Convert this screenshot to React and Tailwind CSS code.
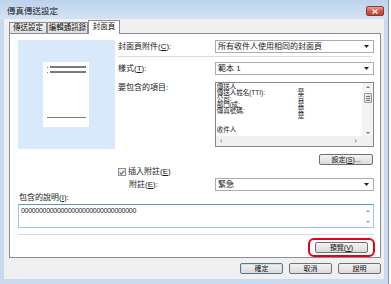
import React from "react";

const font = "font-['Liberation_Sans','Noto_Sans_CJK_TC',sans-serif]";

function Tri({ dir = "down", color = "#222", w = 5, h = 3 }) {
  const pts = {
    down: `0,0 ${w},0 ${w / 2},${h}`,
    up: `0,${h} ${w},${h} ${w / 2},0`,
    left: `${w},0 ${w},${h} 0,${h / 2}`,
    right: `0,0 0,${h} ${w},${h / 2}`,
  }[dir];
  return (
    <svg width={w} height={h} viewBox={`0 0 ${w} ${h}`} className="block shrink-0">
      <polygon points={pts} fill={color} />
    </svg>
  );
}

function Dropdown({ text, className = "" }) {
  return (
    <div
      className={`flex items-center justify-between w-[159px] h-[13px] border border-[#acacac] bg-white pl-[2px] pr-[4px] text-[8px] leading-none text-[#1a1a1a] ${className}`}
    >
      <span>{text}</span>
      <Tri />
    </div>
  );
}

function Btn({ children, className = "" }) {
  return (
    <div
      className={`flex items-center justify-center h-[11px] rounded-[2px] border border-[#707070] bg-linear-to-b from-[#f3f3f3] to-[#dadada] text-[7px] leading-none text-[#111] ${className}`}
    >
      {children}
    </div>
  );
}

function Tab({ children, active, className = "" }) {
  if (active) {
    return (
      <div
        className={`relative z-10 -mb-px flex items-start justify-center h-[14px] pt-[2px] border border-b-0 border-[#898c95] bg-white text-[7.5px] leading-none text-[#111] ${className}`}
      >
        {children}
      </div>
    );
  }
  return (
    <div
      className={`flex items-start justify-center h-[11px] pt-[1px] border border-b-0 border-[#898c95] bg-linear-to-b from-[#f2f2f2] to-[#e0e0e0] text-[7.5px] leading-none text-[#111] ${className}`}
    >
      {children}
    </div>
  );
}

const items = ["傳送人", "傳送人姓名(TTI):", "公司:", "部門/成:", "傳真號碼:"];
const values = ["是", "否", "是", "是", "是"];

export default function App() {
  return (
    <div className={`w-[391px] h-[284px] bg-white overflow-hidden ${font}`}>
      <div className="w-[389px] h-[284px] flex flex-col bg-[#c7daf0] border-r border-[#7f97b5]">
        {/* title bar */}
        <div className="h-[19px] flex items-start pt-[7px] pl-[7px] pr-[4px] bg-linear-to-b from-[#bcd2ec] to-[#d3e3f4]">
          <span className="text-[8.5px] leading-[9px] text-[#1b1b1b]">傳真傳送設定</span>
          <div className="ml-auto -mt-[1px] w-[18px] h-[10px] rounded-[2px] border border-[#8b3b30] bg-linear-to-b from-[#e6a193] via-[#cf5a48] to-[#c7402f] flex items-center justify-center">
            <svg width="6" height="5" viewBox="0 0 6 5">
              <path d="M0.5 0.5 L5.5 4.5 M5.5 0.5 L0.5 4.5" stroke="#fff" strokeWidth="1.3" />
            </svg>
          </div>
        </div>

        {/* client */}
        <div className="ml-[4px] w-[380px] h-[260px] bg-[#f0f0f0] pl-[5px] pt-[1px]">
          <div className="flex items-end h-[13px]">
            <Tab className="w-[38px]">傳送設定</Tab>
            <Tab className="w-[41px]">編輯通訊錄</Tab>
            <Tab active className="w-[32px]">封面頁</Tab>
          </div>

          {/* panel */}
          <div className="w-[372px] h-[225px] border border-[#898c95] bg-white pl-[8px] pt-[6px] text-[8px] leading-none text-[#1a1a1a]">
            <div className="flex">
              {/* preview */}
              <div className="w-[97px] h-[109px] bg-[#d9e9fc] pt-[22px] pl-[25px]">
                <div className="w-[46px] h-[65px] bg-white pt-[4px] pl-[4px] pr-[3px] flex flex-col">
                  <div className="flex items-center gap-[2px]">
                    <div className="w-[1px] h-[1px] bg-[#777]" />
                    <div className="flex-1 h-[2px] bg-[#7a7a7a]" />
                  </div>
                  <div className="flex items-center gap-[2px] mt-[3px]">
                    <div className="w-[1px] h-[1px] bg-[#777]" />
                    <div className="flex-1 h-[2px] bg-[#7a7a7a]" />
                  </div>
                  <div className="mt-auto mb-[9px] h-[1px] bg-[#7a7a7a]" />
                </div>
              </div>

              {/* right form */}
              <div className="ml-[3px] w-[256px]">
                <div className="flex items-center">
                  <span className="w-[97px]">
                    封面頁附件(<u>C</u>):
                  </span>
                  <Dropdown text="所有收件人使用相同的封面頁" />
                </div>
                <div className="mt-[3px] w-[254px] h-px bg-[#d7dde3]" />
                <div className="mt-[5px] flex items-center">
                  <span className="w-[97px]">
                    樣式(<u>T</u>):
                  </span>
                  <Dropdown text="範本 1" className="h-[12px]" />
                </div>
                <div className="mt-[7px] flex items-start">
                  <span className="w-[97px] pt-[2px]">要包含的項目:</span>
                  <div className="w-[160px] h-[65px] border border-[#828790] bg-white flex flex-col">
                    <div className="flex-1 flex min-h-0">
                      <div className="flex-1 flex pl-[1px] pt-[1px] text-[6.5px] leading-[6px] overflow-hidden">
                        <div className="w-[81px] flex flex-col">
                          {items.map((t) => (
                            <div key={t} className="h-[6px] whitespace-nowrap">
                              {t}
                            </div>
                          ))}
                          <div className="h-[6px] mt-[13px]">收件人</div>
                        </div>
                        <div className="flex flex-col pt-[5px]">
                          {values.map((t, i) => (
                            <div key={i} className="h-[6px]">
                              {t}
                            </div>
                          ))}
                        </div>
                      </div>
                      <div className="w-[11px] bg-[#f3f3f3] flex flex-col items-center pt-[3px] pb-[2px]">
                        <Tri dir="up" color="#777" w={4} h={2} />
                        <div className="mt-[5px] w-[8px] h-[10px] rounded-[1px] border border-[#9a9a9a] bg-linear-to-r from-[#f2f2f2] to-[#dcdcdc] flex flex-col items-center justify-center gap-[1px]">
                          <div className="w-[4px] h-px bg-[#777]" />
                          <div className="w-[4px] h-px bg-[#777]" />
                          <div className="w-[4px] h-px bg-[#777]" />
                        </div>
                        <div className="mt-auto">
                          <Tri dir="down" color="#777" w={4} h={2} />
                        </div>
                      </div>
                    </div>
                    <div className="h-[10px] bg-[#f0f0f0] flex items-center pl-[4px] pr-[16px]">
                      <Tri dir="left" color="#aaa" w={2} h={4} />
                      <div className="ml-auto">
                        <Tri dir="right" color="#aaa" w={2} h={4} />
                      </div>
                    </div>
                  </div>
                </div>
                <div className="mt-[7px] flex justify-end pr-[1px]">
                  <Btn className="w-[54px]">
                    設定(<u>S</u>)...
                  </Btn>
                </div>
              </div>
            </div>

            {/* insert note */}
            <div className="mt-[3px] ml-[100px] flex items-center gap-[2px]">
              <div className="w-[8px] h-[8px] border border-[#8f8f8f] bg-linear-to-br from-[#e9e9e9] to-white flex items-center justify-center">
                <svg width="6" height="5" viewBox="0 0 6 5">
                  <path d="M0.6 2.6 L2.3 4.2 L5.4 0.6" stroke="#4a6b96" strokeWidth="1.2" fill="none" />
                </svg>
              </div>
              <span>
                插入附註(<u>E</u>)
              </span>
            </div>
            <div className="mt-[2px] flex items-center">
              <span className="ml-[111px] w-[86px]">
                附註(<u>E</u>):
              </span>
              <Dropdown text="緊急" />
            </div>

            <div className="mt-[3px] ml-[1px]">
              包含的說明(<u>I</u>):
            </div>
            <div className="mt-[2px] w-[356px] h-[24px] border border-[#a7c4e2] border-t-[#5a95cf] bg-white flex">
              <div className="flex-1 pl-[2px] pt-[2px] text-[7px] leading-none tracking-[-0.3px]">
                00000000000000000000000000000000
              </div>
              <div className="w-[10px] flex flex-col items-center pt-[5px] pb-[4px]">
                <Tri dir="up" color="#999" w={4} h={2} />
                <div className="mt-auto">
                  <Tri dir="down" color="#999" w={4} h={2} />
                </div>
              </div>
            </div>
            <div className="mt-[6px] w-[356px] h-px bg-[#d7dde3]" />
            <div className="mt-[3px] w-[357px] flex justify-end">
              <div className="rounded-[6px] border-2 border-[#e2001a] px-[5px] py-[2px]">
                <Btn className="w-[53px]">
                  預覽(<u>V</u>)
                </Btn>
              </div>
            </div>
          </div>

          {/* dialog buttons */}
          <div className="mt-[5px] w-[372px] flex justify-end gap-[6px]">
            <Btn className="w-[43px] border-[#3c7fb1] shadow-[inset_0_0_0_1px_#bfe3f7]">確定</Btn>
            <Btn className="w-[43px]">取消</Btn>
            <Btn className="w-[43px]">說明</Btn>
          </div>
        </div>
      </div>
    </div>
  );
}
